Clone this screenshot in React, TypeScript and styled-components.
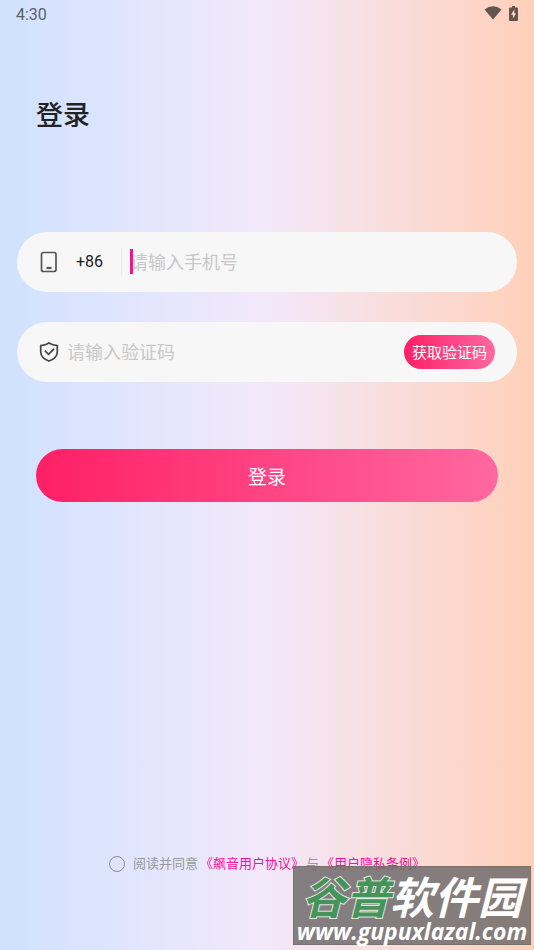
import React, { useState } from "react";
import styled, { createGlobalStyle } from "styled-components";

const GlobalStyle = createGlobalStyle`
  *, *::before, *::after { box-sizing: border-box; }
  body {
    margin: 0;
    font-family: Roboto, "Noto Sans CJK SC", sans-serif;
    color: #222;
  }
  button, input { font: inherit; }
`;

const Page = styled.div`
  position: relative;
  display: flex;
  flex-direction: column;
  min-height: 100vh;
  background: linear-gradient(90deg, #cfe2ff 0%, #f3e8fa 50%, #ffd0b9 100%);
`;

const StatusBar = styled.header`
  display: flex;
  align-items: center;
  justify-content: space-between;
  height: 28px;
  padding: 0 16px;
  font-size: 16px;
  color: #5a606b;
`;

const StatusIcons = styled.div`
  display: flex;
  align-items: center;
  gap: 7px;
  height: 26px;
  margin-bottom: 2px;
  color: #65544e;
`;

const Main = styled.main`
  display: flex;
  flex: 1;
  flex-direction: column;
  padding: 68px 17px 76px;
`;

const Title = styled.h1`
  margin: 0 19px;
  font-size: 27px;
  font-weight: 500;
  line-height: 40px;
`;

const Form = styled.form`
  display: flex;
  flex-direction: column;
  gap: 30px;
  margin-top: 96px;
`;

const Field = styled.div`
  display: flex;
  align-items: center;
  height: 60px;
  padding: 0 22px;
  border-radius: 30px;
  background: #f7f7f7;
`;

const DialCode = styled.span`
  margin-left: 17px;
  padding-right: 18px;
  border-right: 1px solid #ececec;
  font-size: 16px;
  line-height: 28px;
`;

const InputWrap = styled.div`
  position: relative;
  display: flex;
  flex: 1;
  min-width: 0;
  margin-left: 8px;
`;

const TextInput = styled.input`
  width: 100%;
  padding: 2px 0 0;
  border: 0;
  outline: 0;
  background: transparent;
  font-size: 18px;
  line-height: 28px;
  caret-color: #f80fa0;
  &::placeholder { color: #c8c8c8; opacity: 1; }
`;

const Caret = styled.span`
  position: absolute;
  top: 2px;
  left: 0;
  width: 3px;
  height: 25px;
  background: #f80fa0;
`;

const PillButton = styled.button`
  border: 0;
  border-radius: 30px;
  background: linear-gradient(90deg, #ff1f66, #ff68a0);
  color: #fff;
  cursor: pointer;
`;

const CodeButton = styled(PillButton)`
  flex: none;
  height: 34px;
  padding: 0 8px 2px;
  font-size: 15px;
`;

const SubmitButton = styled(PillButton)`
  height: 53px;
  margin: 37px 19px 0;
  font-size: 19px;
`;

const Agreement = styled.div`
  display: flex;
  align-items: center;
  justify-content: center;
  gap: 2px;
  margin-top: auto;
  font-size: 13px;
  line-height: 20px;
  color: #999;
`;

const AgreeLabel = styled.label`
  display: flex;
  align-items: center;
  gap: 8px;
`;

const AgreeBox = styled.input`
  appearance: none;
  width: 16px;
  height: 16px;
  margin: 0;
  border: 1px solid #8d8d95;
  border-radius: 50%;
  &:checked { background: #f80fa0; }
`;

const PolicyLink = styled.a`
  color: #f80fa0;
  text-decoration: none;
`;

const Watermark = styled.aside`
  position: absolute;
  right: 3px;
  bottom: 5px;
  width: 238px;
  height: 79px;
  border: 1px solid #77706f;
  background: rgba(112, 108, 109, 0.85);
  color: #fff;
  font-style: italic;
`;

const BrandName = styled.div`
  display: flex;
  justify-content: center;
  font-family: "Noto Sans CJK SC", sans-serif;
  font-size: 44px;
  font-weight: 700;
  line-height: 56px;
`;

const BrandAccent = styled.span`
  color: #45945a;
  -webkit-text-stroke: 2px #e4e8e4;
  paint-order: stroke fill;
`;

const BrandUrl = styled.div`
  display: flex;
  justify-content: center;
  margin-top: -4px;
  font-family: "Open Sans", sans-serif;
  font-size: 23px;
  font-weight: 700;
  line-height: 24px;
  white-space: nowrap;
`;

const WifiIcon = () => (
  <svg width="18" height="14" viewBox="0 0 18 14" aria-hidden="true">
    <path d="M0.5 3.5Q9 -3 17.5 3.5L9 13.5Z" fill="currentColor" />
  </svg>
);

const BatteryIcon = () => (
  <svg width="9" height="15" viewBox="0 0 9 15" aria-hidden="true">
    <path d="M3 0h3v1.5h2q1 0 1 1V14q0 1-1 1H1q-1 0-1-1V2.500q0-1 1-1h2Z" fill="currentColor" />
    <path d="M5.300 3.500L2 8.800h2v3.700l3-5.300H5.300Z" fill="#ffdccb" />
  </svg>
);

const PhoneIcon = () => (
  <svg width="20" height="22" viewBox="0 0 20 22" fill="none" stroke="#555" aria-hidden="true">
    <rect x="2.500" y="1.500" width="14.500" height="19" rx="2" strokeWidth="1.700" />
    <path d="M7.500 17h5" strokeWidth="2.200" />
  </svg>
);

const ShieldIcon = () => (
  <svg width="20" height="20" viewBox="0 0 20 20" fill="none" stroke="#444" strokeWidth="1.700" aria-hidden="true">
    <path d="M10 1Q6.500 3.200 1.700 3.700V10Q2 16.500 10 19Q18 16.500 18.300 10V3.700Q13.500 3.200 10 1Z" />
    <path d="M5.800 8.700L9.500 12.300L15 6.800" />
  </svg>
);

export default function App() {
  const [phone, setPhone] = useState("");
  const [code, setCode] = useState("");

  return (
    <Page>
      <GlobalStyle />
      <StatusBar>
        <time>4:30</time>
        <StatusIcons>
          <WifiIcon />
          <BatteryIcon />
        </StatusIcons>
      </StatusBar>
      <Main>
        <Title>登录</Title>
        <Form onSubmit={(e) => e.preventDefault()}>
          <Field>
            <PhoneIcon />
            <DialCode>+86</DialCode>
            <InputWrap>
              <TextInput
                type="tel"
                aria-label="手机号"
                placeholder="请输入手机号"
                value={phone}
                onChange={(e) => setPhone(e.target.value)}
              />
              {phone === "" && <Caret />}
            </InputWrap>
          </Field>
          <Field>
            <ShieldIcon />
            <InputWrap>
              <TextInput
                type="text"
                inputMode="numeric"
                aria-label="验证码"
                placeholder="请输入验证码"
                value={code}
                onChange={(e) => setCode(e.target.value)}
              />
            </InputWrap>
            <CodeButton type="button">获取验证码</CodeButton>
          </Field>
          <SubmitButton type="submit">登录</SubmitButton>
        </Form>
        <Agreement>
          <AgreeLabel>
            <AgreeBox type="checkbox" />
            阅读并同意
          </AgreeLabel>
          <PolicyLink href="#terms">《飙音用户协议》</PolicyLink>
          <span>与</span>
          <PolicyLink href="#privacy">《用户隐私条例》</PolicyLink>
        </Agreement>
      </Main>
      <Watermark>
        <BrandName>
          <BrandAccent>谷普</BrandAccent>
          <span>软件园</span>
        </BrandName>
        <BrandUrl>www.gupuxlazal.com</BrandUrl>
      </Watermark>
    </Page>
  );
}
